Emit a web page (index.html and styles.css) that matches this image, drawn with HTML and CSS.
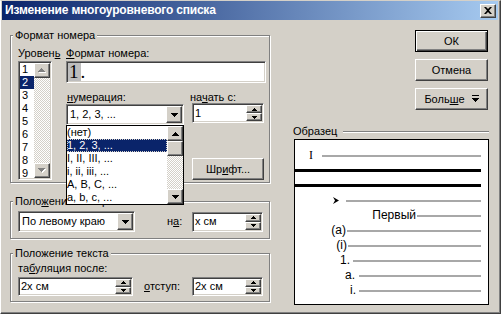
FILE: index.html
```html
<!DOCTYPE html>
<html lang="ru">
  <head>
    <meta charset="UTF-8" />
    <title>Изменение многоуровневого списка</title>
    <link rel="stylesheet" href="styles.css">
  </head>
  <body>
    <div class="win">
      <div class="title">
        <span class="title-text">Изменение многоуровневого списка</span>
        <span class="btn close">
          <svg width="8" height="7" viewBox="0 0 8 7"><path d="M0 0h2l2 2 2-2h2L5 3.5 8 7H6L4 5 2 7H0l3-3.5z"/></svg>
        </span>
      </div>

      <div class="main">
        <!-- левая колонка -->
        <div class="left">
          <div class="group g1">
            <div class="legend">Формат номера</div>
            <div class="g1-inner">
              <div class="level-col">
                <div class="lbl">Уровен<u>ь</u></div>
                <div class="field listbox">
                  <div class="items">
                    <div>1</div>
                    <div class="sel">2</div>
                    <div>3</div>
                    <div>4</div>
                    <div>5</div>
                    <div>6</div>
                    <div>7</div>
                    <div>8</div>
                    <div>9</div>
                  </div>
                  <div class="vscroll">
                    <span class="btn sbtn">
                      <svg width="8" height="5"><path fill="#fff" d="M4 1h1v1h1v1h1v1h1v1H1V4h1V3h1V2h1z"/><path fill="#808080" d="M3 0h1v1h1v1h1v1h1v1H0V3h1V2h1V1h1z"/></svg>
                    </span>
                    <span class="track"></span>
                    <span class="btn sbtn">
                      <svg width="8" height="5"><path fill="#fff" d="M1 1h7v1H7v1H6v1H5v1H4V4H3V3H2V2H1z"/><path fill="#808080" d="M0 0h7v1H6v1H5v1H4v1H3V3H2V2H1V1H0z"/></svg>
                    </span>
                  </div>
                </div>
              </div>

              <div class="fmt-col">
                <div class="lbl"><u>Ф</u>ормат номера:</div>
                <div class="field fmt"><span class="num1">1</span><span class="dot">.</span></div>
                <div class="ctl-row labels">
                  <div class="lbl w-combo"><u>н</u>умерация:</div>
                  <div class="lbl">на<u>ч</u>ать с:</div>
                </div>
                <div class="ctl-row">
                  <div class="combo-wrap">
                    <div class="field combo">
                      <span class="val">1, 2, 3, ...</span>
                      <span class="btn dbtn">
                        <svg width="7" height="4"><path d="M0 0h7v1H6v1H5v1H4v1H3V3H2V2H1V1H0z"/></svg>
                      </span>
                    </div>
                    <div class="droplist">
                      <div class="opts">
                        <div>(нет)</div>
                        <div class="sel"><span>1, 2, 3, ...</span></div>
                        <div>I, II, III, ...</div>
                        <div>i, ii, iii, ...</div>
                        <div>A, B, C, ...</div>
                        <div>a, b, c, ...</div>
                      </div>
                      <div class="vscroll">
                        <span class="btn sbtn">
                          <svg width="7" height="4"><path d="M3 0h1v1h1v1h1v1h1v1H0V3h1V2h1V1h1z"/></svg>
                        </span>
                        <span class="btn thumb"></span>
                        <span class="track"></span>
                        <span class="btn sbtn">
                          <svg width="7" height="4"><path d="M0 0h7v1H6v1H5v1H4v1H3V3H2V2H1V1H0z"/></svg>
                        </span>
                      </div>
                    </div>
                  </div>
                  <div class="field spin start">
                    <span class="val">1</span>
                    <span class="spin-btns">
                      <span class="btn"><svg width="5" height="3"><path d="M2 0h1v1h1v1h1v1H0V2h1V1h1z"/></svg></span>
                      <span class="btn"><svg width="5" height="3"><path d="M0 0h5v1H4v1H3v1H2V2H1V1H0z"/></svg></span>
                    </span>
                  </div>
                </div>
                <div class="btn push font-btn">Шр<u>и</u>фт...</div>
              </div>
            </div>
          </div>

          <div class="group g2">
            <div class="legend">Поло<u>ж</u>ение номера</div>
            <div class="ctl-row g-row">
              <div class="field combo align">
                <span class="val">По левому краю</span>
                <span class="btn dbtn">
                  <svg width="7" height="4"><path d="M0 0h7v1H6v1H5v1H4v1H3V3H2V2H1V1H0z"/></svg>
                </span>
              </div>
              <div class="lbl na">н<u>а</u>:</div>
              <div class="field spin at">
                <span class="val">x см</span>
                <span class="spin-btns">
                  <span class="btn"><svg width="5" height="3"><path d="M2 0h1v1h1v1h1v1H0V2h1V1h1z"/></svg></span>
                  <span class="btn"><svg width="5" height="3"><path d="M0 0h5v1H4v1H3v1H2V2H1V1H0z"/></svg></span>
                </span>
              </div>
            </div>
          </div>

          <div class="group g3">
            <div class="legend">Положение текста</div>
            <div class="lbl tab-lbl">та<u>б</u>уляция после:</div>
            <div class="ctl-row g-row2">
              <div class="field spin tab">
                <span class="val">2x см</span>
                <span class="spin-btns">
                  <span class="btn"><svg width="5" height="3"><path d="M2 0h1v1h1v1h1v1H0V2h1V1h1z"/></svg></span>
                  <span class="btn"><svg width="5" height="3"><path d="M0 0h5v1H4v1H3v1H2V2H1V1H0z"/></svg></span>
                </span>
              </div>
              <div class="lbl indent-lbl"><u>о</u>тступ:</div>
              <div class="field spin at">
                <span class="val">2x см</span>
                <span class="spin-btns">
                  <span class="btn"><svg width="5" height="3"><path d="M2 0h1v1h1v1h1v1H0V2h1V1h1z"/></svg></span>
                  <span class="btn"><svg width="5" height="3"><path d="M0 0h5v1H4v1H3v1H2V2H1V1H0z"/></svg></span>
                </span>
              </div>
            </div>
          </div>
        </div>

        <!-- правая колонка -->
        <div class="right">
          <div class="buttons">
            <div class="btn push def">ОК</div>
            <div class="btn push">Отмена</div>
            <div class="btn push">Боль<u>ш</u>е
              <svg class="more-ico" width="7" height="8"><path d="M0 0h7v1H0zM0 3h7v1H6v1H5v1H4v1H3V6H2V5H1V4H0z"/></svg>
            </div>
          </div>

          <div class="sample-head">
            <span>Образец</span>
            <span class="etch"></span>
          </div>
          <div class="preview">
            <div class="pv-row"><span class="mk m1">I</span><span class="ln"></span></div>
            <div class="pv-row heavy"><span class="ln"></span></div>
            <div class="pv-row heavy"><span class="ln"></span></div>
            <div class="pv-row"><span class="mk m4"><svg width="6" height="7"><path d="M0 0l6 3.5L0 7l2-3.5z"/></svg></span><span class="ln"></span></div>
            <div class="pv-row"><span class="mk m5">Первый</span><span class="ln"></span></div>
            <div class="pv-row"><span class="mk m6">(a)</span><span class="ln"></span></div>
            <div class="pv-row"><span class="mk m7">(i)</span><span class="ln"></span></div>
            <div class="pv-row"><span class="mk m8">1.</span><span class="ln"></span></div>
            <div class="pv-row"><span class="mk m9">a.</span><span class="ln"></span></div>
            <div class="pv-row"><span class="mk m10">i.</span><span class="ln"></span></div>
          </div>
        </div>
      </div>
    </div>
  </body>
</html>
```

FILE: styles.css
```css
* {
  box-sizing: border-box;
}
body {
  margin: 0;
  background: #d4d0c8;
  font: 11px/13px "Liberation Sans", Arial, sans-serif;
  color: #000;
}
u {
  text-decoration: underline;
  text-underline-offset: 1px;
}
svg {
  display: block;
}

/* окно */
.win {
  width: 501px;
  height: 314px;
  display: flex;
  flex-direction: column;
  padding: 0 2px 2px 1px;
  border: 1px solid;
  border-color: #d4d0c8 #404040 #404040 #fff;
  box-shadow: inset -1px -1px #808080;
  background: #d4d0c8;
}
.title {
  height: 19px;
  display: flex;
  align-items: center;
  padding-left: 3px;
  background: linear-gradient(to right, #0a246a, #a6caf0);
  color: #fff;
  font-weight: bold;
  font-size: 12px;
  letter-spacing: -0.2px;
}
.close {
  margin-left: auto;
  margin-right: 2px;
  width: 16px;
  height: 14px;
}
.main {
  flex: 1;
  display: flex;
}

/* объёмные элементы */
.btn {
  display: flex;
  align-items: center;
  justify-content: center;
  background: #d4d0c8;
  border: 1px solid;
  border-color: #fff #404040 #404040 #fff;
  box-shadow: inset -1px -1px #808080;
}
.push {
  width: 73px;
  height: 22px;
}
.def {
  border: 1px solid #000;
  box-shadow: inset 1px 1px #fff, inset -1px -1px #404040, inset -2px -2px #808080;
}
.field {
  background: #fff;
  border: 1px solid;
  border-color: #808080 #fff #fff #808080;
  box-shadow: inset 1px 1px #404040, inset -1px -1px #d4d0c8;
  padding: 1px;
}
.track {
  flex: 1;
  background: repeating-conic-gradient(#fff 0 25%, #d4d0c8 0 50%) 0 0 / 2px 2px;
}

/* группы */
.left {
  width: 268px;
  padding-left: 8px;
}
.group {
  width: 260px;
  border: 1px solid #808080;
  box-shadow: inset 1px 1px #fff, 1px 1px #fff;
}
.legend {
  display: table;
  margin: -7px 0 0 2px;
  padding: 0 2px;
  background: #d4d0c8;
}
.lbl {
  white-space: nowrap;
}

.g1 {
  margin-top: 15px;
  height: 148px;
}
.g1-inner {
  display: flex;
  padding: 5px 0 0 7px;
}
.level-col {
  flex: none;
  width: 34px;
}
.listbox {
  display: flex;
  width: 34px;
  height: 119px;
  margin-top: 1px;
  overflow: hidden;
}
.items {
  flex: 1;
}
.items div {
  height: 13px;
  padding-left: 2px;
}
.items .sel,
.opts .sel {
  background: #0a246a;
  color: #fff;
}
.vscroll {
  width: 16px;
  display: flex;
  flex-direction: column;
}
.sbtn {
  height: 15px;
  flex: none;
}
.fmt-col {
  flex: none;
  margin-left: 14px;
  width: 200px;
}
.fmt {
  height: 22px;
  margin-top: 1px;
  display: flex;
  align-items: center;
  font: 19px/18px "Liberation Serif", "Times New Roman", serif;
}
.num1 {
  background: #bdbdbd;
  padding: 0 2px 0 1px;
}
.ctl-row {
  display: flex;
  align-items: flex-start;
}
.labels {
  margin-top: 8px;
}
.w-combo {
  width: 124px;
  padding-left: 1px;
}
.combo-wrap {
  position: relative;
}
.combo {
  width: 118px;
  height: 21px;
  display: flex;
  align-items: center;
}
.combo .val {
  flex: 1;
  padding-left: 2px;
  white-space: nowrap;
}
.dbtn {
  width: 16px;
  height: 17px;
}
.spin {
  height: 20px;
  display: flex;
  align-items: center;
}
.spin .val {
  flex: 1;
  padding-left: 1px;
  white-space: nowrap;
}
.spin-btns {
  width: 16px;
  height: 100%;
  display: flex;
  flex-direction: column;
}
.spin-btns .btn {
  flex: 1;
}
.start {
  width: 72px;
  margin: -1px 0 0 8px;
}

/* раскрытый список */
.droplist {
  position: absolute;
  left: 0;
  top: 100%;
  z-index: 5;
  width: 118px;
  height: 80px;
  display: flex;
  background: #fff;
  border: 1px solid #000;
}
.opts {
  flex: 1;
}
.opts div {
  height: 13px;
  white-space: nowrap;
}
.opts .sel span {
  display: block;
  height: 13px;
  outline: 1px dotted #d4d0c8;
  outline-offset: -1px;
}
.thumb {
  height: 15px;
  flex: none;
}
.font-btn {
  margin: 33px 0 0 126px;
  width: 72px;
}

.g2 {
  margin-top: 18px;
  height: 38px;
}
.g-row {
  margin-top: 3px;
  padding-left: 7px;
  align-items: center;
}
.align {
  width: 117px;
}
.na {
  margin-left: 32px;
  width: 25px;
}
.at {
  width: 71px;
}

.g3 {
  margin-top: 14px;
  height: 49px;
}
.tab-lbl {
  margin: 2px 0 0 7px;
}
.g-row2 {
  margin-top: 2px;
  padding-left: 7px;
  align-items: center;
}
.tab {
  width: 115px;
  height: 19px;
}
.g3 .at {
  height: 19px;
}
.indent-lbl {
  margin-left: 11px;
  width: 48px;
}

/* правая колонка */
.right {
  flex: 1;
}
.buttons {
  margin: 10px 0 0 145px;
  display: flex;
  flex-direction: column;
  gap: 7px;
}
.more-ico {
  margin-left: 7px;
}
.sample-head {
  margin: 15px 0 0 23px;
  width: 196px;
  display: flex;
  align-items: center;
}
.etch {
  flex: 1;
  margin-left: 6px;
  height: 2px;
  border-top: 1px solid #808080;
  border-bottom: 1px solid #fff;
}
.preview {
  margin: 1px 0 0 24px;
  width: 195px;
  height: 166px;
  padding: 8px 7px 0 0;
  background: #fff;
  border: 1px solid #000;
  font-size: 12px;
}
.pv-row {
  height: 15px;
  display: flex;
  align-items: center;
}
.mk {
  flex: none;
  display: flex;
  justify-content: flex-end;
  line-height: 15px;
}
.ln {
  flex: 1;
  height: 2px;
  background: #a8a8a8;
}
.heavy .ln {
  height: 3px;
  background: #000;
}
.m1 {
  width: 27px;
  padding-right: 9px;
  font: 12px/15px "Liberation Serif", serif;
}
.m4 {
  width: 51px;
  padding-right: 7px;
}
.m5 {
  width: 122px;
  padding-right: 1px;
}
.m6 {
  width: 52px;
  padding-right: 1px;
}
.m7 {
  width: 53px;
  padding-right: 1px;
}
.m8 {
  width: 58px;
  padding-right: 3px;
}
.m9 {
  width: 64px;
  padding-right: 4px;
}
.m10 {
  width: 64px;
  padding-right: 3px;
}
```
